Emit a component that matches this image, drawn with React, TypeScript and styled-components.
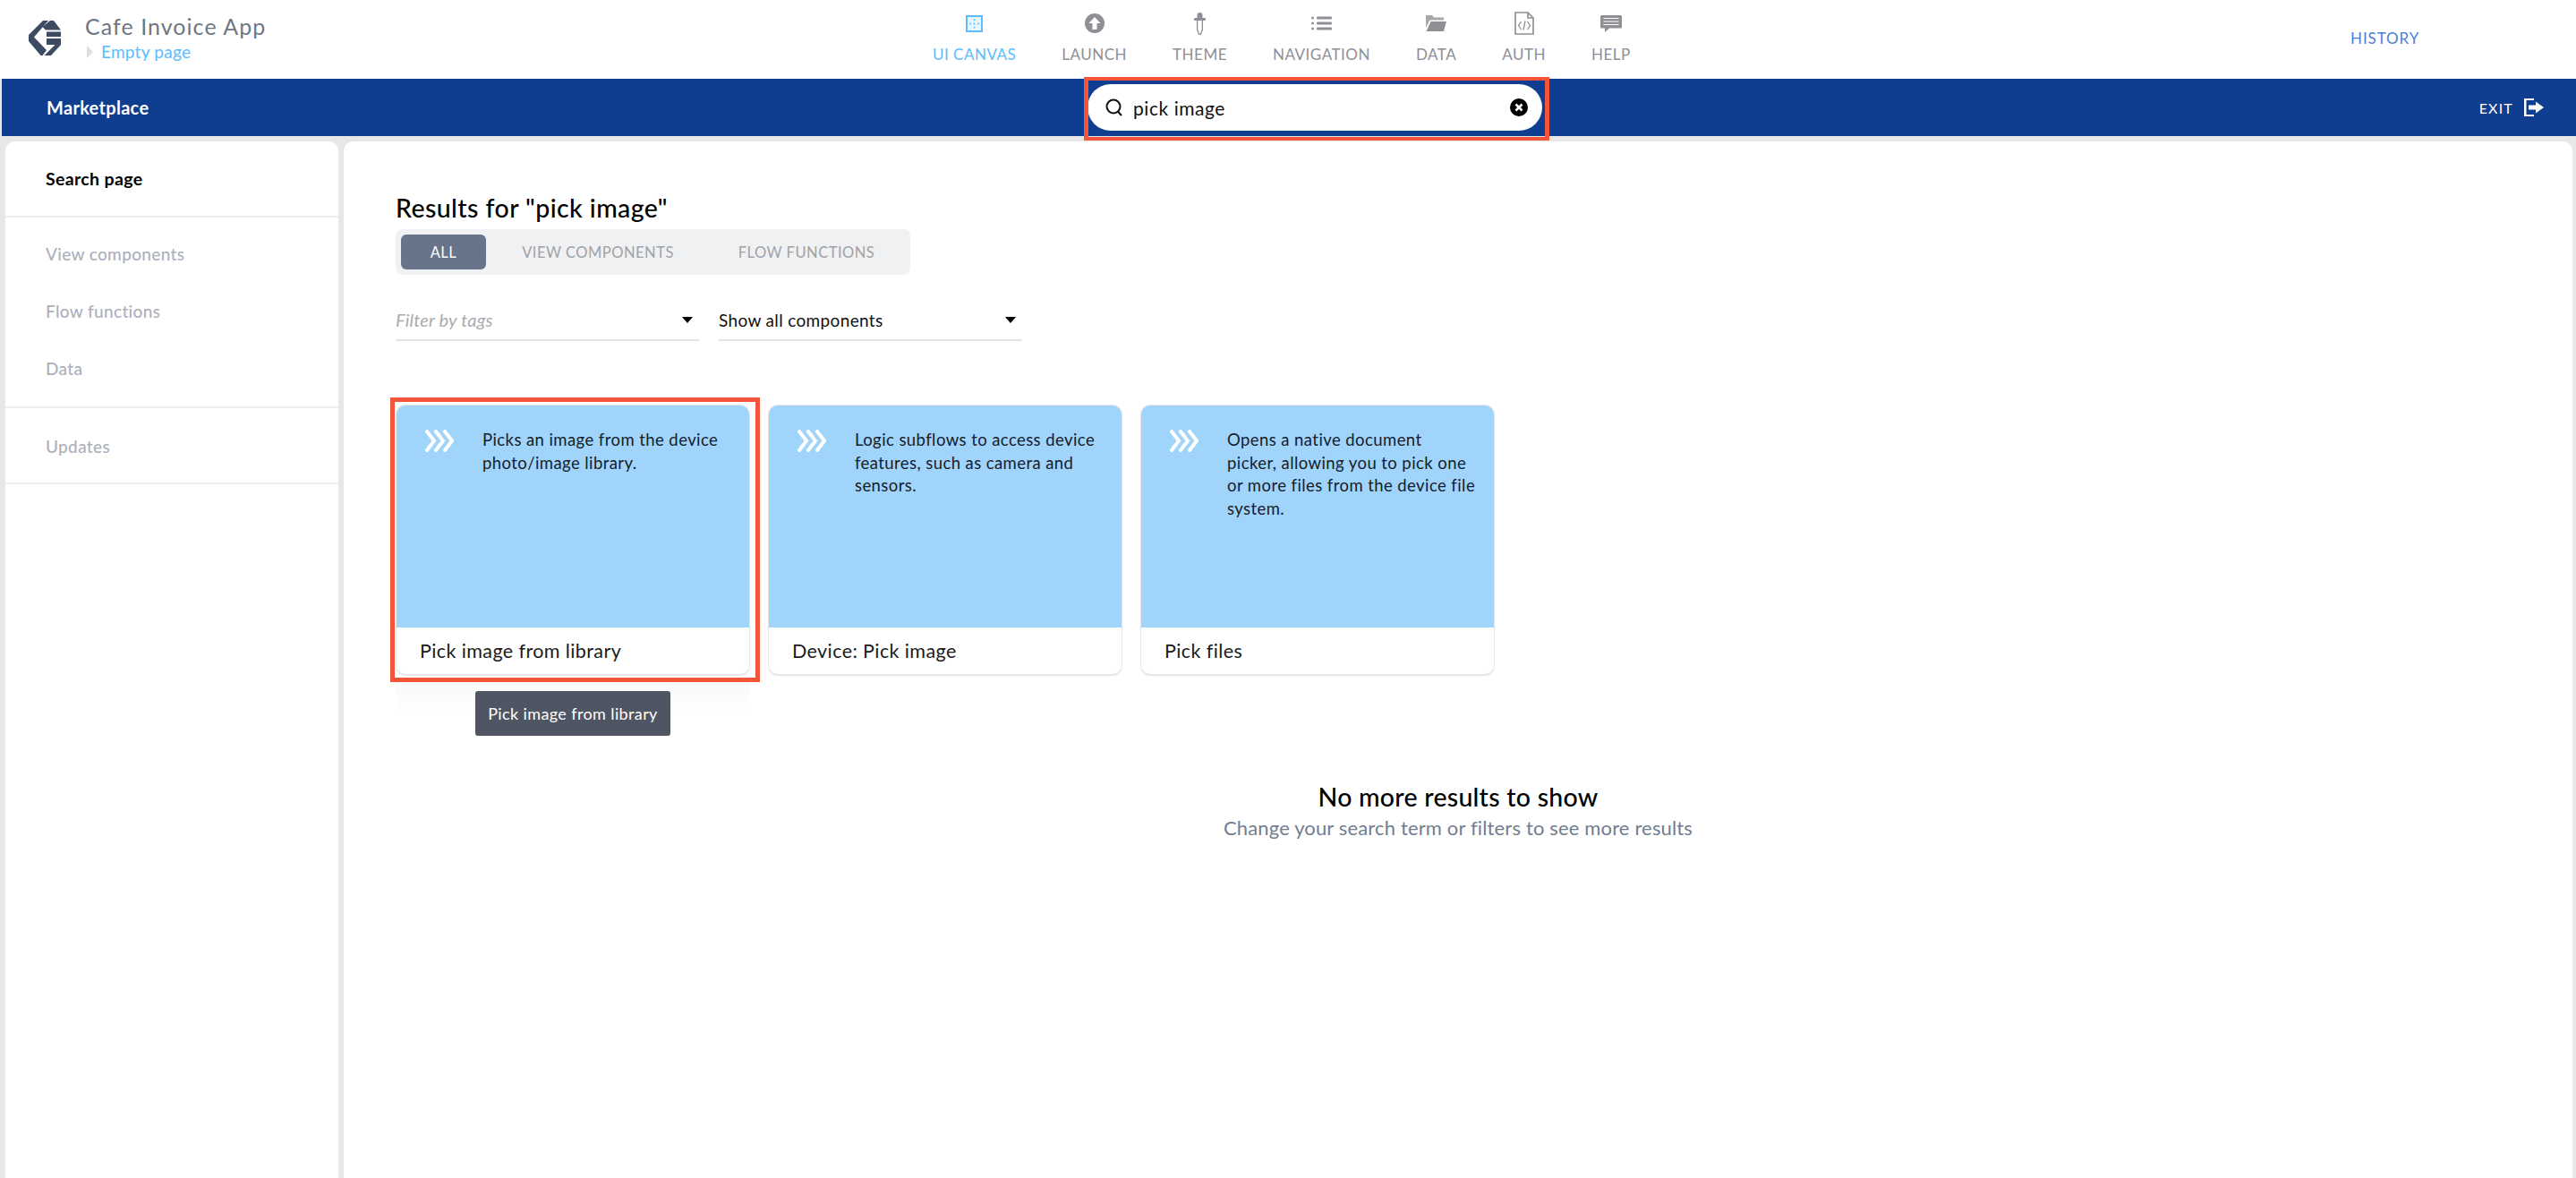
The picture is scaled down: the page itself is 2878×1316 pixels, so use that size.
import React from "react";
import styled, { createGlobalStyle } from "styled-components";

const Global = createGlobalStyle`
  html, body { margin: 0; padding: 0; background: #e7e7e7; }
  body { font-family: "Lato", "Open Sans", sans-serif; color: #000; }
  * { box-sizing: border-box; }
`;

const Page = styled.div`
  width: 2878px; height: 1316px; display: flex; flex-direction: column; overflow: hidden; background: #e7e7e7;
`;
const TopBar = styled.header`
  height: 88px; flex: none; background: #fff; position: relative; display: flex; align-items: stretch; justify-content: space-between;
`;
const Brand = styled.div`
  width: 1060px; display: flex; align-items: flex-start; padding: 23px 0 0 32px;
`;
const BrandText = styled.div`
  margin-left: 26px; margin-top: -9px; display: flex; flex-direction: column;
`;
const AppName = styled.div`
  font-size: 25px; line-height: 30px; letter-spacing: 1.05px; color: #6f7683;
`;
const PageCrumb = styled.div`
  display: flex; align-items: center; margin-top: 2px; font-size: 19px; line-height: 24px; color: #5bbcff; letter-spacing: 0.25px;
`;
const Caret = styled.span`
  width: 0; height: 0; border-style: solid; border-width: 7px 0 7px 7px; border-color: transparent transparent transparent #dcdee2; margin: 0 9px 0 2px;
`;
const Nav = styled.nav`
  display: flex; gap: 51px; position: absolute; left: 1042px; top: 0;
`;
const NavItem = styled.div<{ $active?: boolean }>`
  display: flex; flex-direction: column; align-items: center; height: 88px; padding-top: 11px; color: ${(p) => (p.$active ? "#5bbcff" : "#8e9095")};
  font-size: 17px; letter-spacing: 0.5px; white-space: nowrap;
`;
const NavIcon = styled.div`
  height: 30px; display: flex; align-items: center; justify-content: center;
`;
const NavLabel = styled.div`
  margin-top: 9px; line-height: 22px;
`;
const History = styled.div`
  position: absolute; left: 2626px; top: 33px; font-size: 17px; line-height: 20px; letter-spacing: 0.9px; color: #4a7fd6;
`;
const BlueBar = styled.div`
  height: 64px; flex: none; margin-left: 2px; background: #0f3d8f; display: flex; align-items: center; justify-content: space-between; padding: 0 36px 0 50px; position: relative;
`;
const BarTitle = styled.div`
  color: #fff; font-size: 20px; font-weight: 700; letter-spacing: 0.3px;
`;
const SearchPill = styled.div`
  position: absolute; left: 1213px; top: 6px; width: 508px; height: 52px; border-radius: 26px; background: #fff; display: flex; align-items: center; padding: 0 16px 0 20px;
`;
const SearchText = styled.div`
  flex: 1; margin-left: 11px; font-size: 21px; letter-spacing: 0.55px; color: #111;
`;
const RedBox = styled.div`
  position: absolute; border: 5px solid #f4553a; pointer-events: none;
`;
const SearchHighlight = styled(RedBox)`
  left: 1209px; top: -2px; width: 520px; height: 71px; border-width: 4px 5px;
`;
const Exit = styled.div`
  display: flex; align-items: center; gap: 12px; color: #fff; font-size: 16px; letter-spacing: 1.2px;
`;
const Body = styled.div`
  flex: 1; display: flex; gap: 6px; padding: 6px 4px 0 6px; min-height: 0;
`;
const Sidebar = styled.aside`
  width: 372px; flex: none; background: #fff; border-radius: 10px 10px 0 0; display: flex; flex-direction: column;
`;
const SideGroup = styled.div<{ $top: number; $bottom: number }>`
  display: flex; flex-direction: column; border-bottom: 2px solid #eceef0; padding: ${(p) => p.$top}px 0 ${(p) => p.$bottom}px;
`;
const SideItem = styled.div<{ $active?: boolean }>`
  height: 64px; display: flex; align-items: center; padding-left: 45px; letter-spacing: 0.35px;
  font-size: ${(p) => (p.$active ? "19.500px" : "19px")}; font-weight: ${(p) => (p.$active ? 700 : 500)};
  color: ${(p) => (p.$active ? "#000" : "#acb0bc")};
`;
const Main = styled.main`
  flex: 1; background: #fff; border-radius: 10px 10px 0 0; padding: 58px 0 0 58px; display: flex; flex-direction: column; position: relative;
`;
const Heading = styled.h1`
  margin: 0; font-size: 28.500px; line-height: 33px; font-weight: 500; letter-spacing: 0.42px; color: #000;
`;
const Tabs = styled.div`
  margin-top: 7px; width: 575px; height: 51px; background: #f0f1f3; border-radius: 8px; display: flex; align-items: center; padding-left: 6px;
`;
const Tab = styled.div<{ $active?: boolean; $w: number }>`
  width: ${(p) => p.$w}px; height: 39px; border-radius: 6px; display: flex; align-items: center; justify-content: center; font-size: 16.500px; letter-spacing: 0.5px;
  color: ${(p) => (p.$active ? "#fff" : "#a0a2a6")}; background: ${(p) => (p.$active ? "#677489" : "transparent")};
`;
const Filters = styled.div`
  display: flex; gap: 22px; margin-top: 27px;
`;
const Select = styled.div<{ $placeholder?: boolean }>`
  width: 339px; height: 47px; border-bottom: 2px solid #e2e3e5; display: flex; align-items: center; justify-content: space-between; padding-right: 7px; padding-top: 1px;
  font-size: ${(p) => (p.$placeholder ? "20px" : "19px")}; font-style: ${(p) => (p.$placeholder ? "italic" : "normal")}; color: ${(p) => (p.$placeholder ? "#a9abb0" : "#111")};
  letter-spacing: ${(p) => (p.$placeholder ? "0.2px" : "0.35px")};
`;
const Arrow = styled.span`
  width: 0; height: 0; border-style: solid; border-width: 7px 6px 0 6px; border-color: #000 transparent transparent transparent;
`;
const Cards = styled.div`
  display: flex; gap: 22px; margin-top: 72px; margin-left: 1px; position: relative;
`;
const Card = styled.div`
  width: 394px; height: 300px; border-radius: 10px; background: #fff; overflow: hidden; display: flex; flex-direction: column;
  box-shadow: 0 0 0 1px #e4e6ea, 0 2px 2px rgba(60, 70, 90, 0.16);
`;
const CardArt = styled.div`
  height: 248px; background: #a0d4fb; display: flex; padding: 27px 20px 0 32px;
`;
const Chevrons = styled.svg`
  width: 32px; height: 25px; flex: none; margin-right: 32px;
`;
const CardDesc = styled.div`
  font-size: 18.500px; line-height: 25.600px; letter-spacing: 0.42px; color: #16202c; margin-top: -1px;
`;
const CardTitle = styled.div`
  flex: 1; display: flex; align-items: center; padding-left: 26px; font-size: 21.500px; letter-spacing: 0.4px; color: #1a1a1a;
`;
const CardHighlight = styled(RedBox)`
  left: -7px; top: -9px; width: 413px; height: 318px;
`;
const Tooltip = styled.div`
  position: absolute; left: 88px; top: 319px; width: 218px; height: 50px; border-radius: 3px; background: #4f5562; color: #fff; display: flex; align-items: center; justify-content: center; font-size: 18px; letter-spacing: 0.38px;
`;
const TooltipGlow = styled.div`
  position: absolute; left: 0; top: 309px; width: 394px; height: 36px; background: linear-gradient(rgba(60, 70, 90, 0.03), rgba(60, 70, 90, 0));
`;
const Empty = styled.div`
  margin-top: 119px; margin-left: -58px; text-align: center; display: flex; flex-direction: column; align-items: center;
`;
const EmptyTitle = styled.div`
  font-size: 28.500px; line-height: 36px; font-weight: 500; letter-spacing: 0.25px; color: #000;
`;
const EmptySub = styled.div`
  margin-top: 2px; font-size: 22px; line-height: 30px; letter-spacing: 0.15px; color: #727d90;
`;

const Logo = () => (
  <svg width="37" height="40" viewBox="0 0 37 40" fill="#3c4b61">
    <path d="M16 0 L22 0 L6 18.500 L20 33 L15.500 39 L13.500 39 L0 23 L0 16 Z" />
    <path d="M24 0 L28 0 L36 10.500 L19 10.500 L15.500 7 Z" />
    <path d="M20 12.500 L36 12.500 L36 18 L20 18 Z" />
    <path d="M20 20 L36 20 L36 27 L25 39 L17.500 39 L29.500 27 L20 27 Z" />
  </svg>
);

const Cv = () => (
  <Chevrons viewBox="0 0 32 25" fill="none" stroke="#fff" strokeWidth="4" strokeLinecap="round" strokeLinejoin="miter">
    <path d="M2 2 L10 12.500 L2 23" />
    <path d="M12 2 L20 12.500 L12 23" />
    <path d="M22 2 L30 12.500 L22 23" />
  </Chevrons>
);

const CanvasIcon = () => (
  <svg width="19" height="19" viewBox="0 0 19 19">
    <rect x="1" y="1" width="17" height="17" fill="#eaf6ff" stroke="#5bbcff" strokeWidth="2" />
    <g fill="#5bbcff">
      <circle cx="9.500" cy="5.200" r="1" />
      <circle cx="5.200" cy="9.500" r="1" />
      <circle cx="9.500" cy="9.500" r="1" />
      <circle cx="13.800" cy="9.500" r="1" />
      <circle cx="9.500" cy="13.800" r="1" />
    </g>
  </svg>
);
const LaunchIcon = () => (
  <svg width="22" height="22" viewBox="0 0 22 22">
    <circle cx="11" cy="11" r="11" fill="#8e9095" />
    <path d="M11 4 L17.500 11 L13.500 11 L13.500 18 L8.500 18 L8.500 11 L4.500 11 Z" fill="#fff" />
  </svg>
);
const ThemeIcon = () => (
  <svg width="13" height="25" viewBox="0 0 13 25" fill="#8e9095">
    <path d="M3.500 6 L3.500 2.500 Q3.500 0 6.500 0 Q9.500 0 9.500 2.500 L9.500 6 Z" />
    <rect x="0" y="6" width="13" height="3" rx="1" />
    <path d="M3 9 L10 9 L10 19.500 L7.800 25 L5.200 25 L3 19.500 Z M4.300 9 L4.300 19.300 L6.200 23.800 L6.800 23.800 L8.700 19.300 L8.700 9 Z" fillRule="evenodd" />
  </svg>
);
const NavigationIcon = () => (
  <svg width="23" height="16" viewBox="0 0 23 16" fill="#8e9095">
    <circle cx="1.500" cy="2" r="1.500" />
    <rect x="6" y="0.500" width="17" height="3" rx="1" />
    <circle cx="1.500" cy="8" r="1.500" />
    <rect x="6" y="6.500" width="17" height="3" rx="1" />
    <circle cx="1.500" cy="14" r="1.500" />
    <rect x="6" y="12.500" width="17" height="3" rx="1" />
  </svg>
);
const FolderIcon = () => (
  <svg width="23" height="18" viewBox="0 0 23 18" fill="#8e9095">
    <path d="M0 0 L7 0 L9 2.500 L20 2.500 L20 5.500 L4.500 5.500 L0 14 Z" fill="#a6a8ac" />
    <path d="M5.500 7 L23 7 L20 18 L0.500 18 Z" />
  </svg>
);
const AuthIcon = () => (
  <svg width="22" height="26" viewBox="0 0 22 26" fill="none" stroke="#8e9095" strokeWidth="1.700">
    <path d="M1 1 L15 1 L21 7 L21 25 L1 25 Z" />
    <path d="M15 1 L15 7 L21 7" />
    <path d="M7.500 11 L4.500 15.500 L7.500 20 M14.500 11 L17.500 15.500 L14.500 20 M12 10.500 L10 20.500" strokeWidth="1.300" />
  </svg>
);
const HelpIcon = () => (
  <svg width="24" height="19" viewBox="0 0 24 19" fill="#8e9095">
    <path d="M1.500 0 L22.500 0 Q24 0 24 1.500 L24 13 Q24 14.500 22.500 14.500 L10 14.500 L5 19 L5 14.500 L1.500 14.500 Q0 14.500 0 13 L0 1.500 Q0 0 1.500 0 Z" />
    <path d="M3.500 3.500h17M3.500 7h17M3.500 10.500h17" stroke="#fff" strokeWidth="1.200" />
  </svg>
);
const SearchIcon = () => (
  <svg width="20" height="20" viewBox="0 0 20 20" fill="none" stroke="#111" strokeWidth="2">
    <circle cx="9" cy="9" r="7.500" />
    <path d="M13.500 14 L18 19" />
  </svg>
);
const ClearIcon = () => (
  <svg width="20" height="20" viewBox="0 0 20 20">
    <circle cx="10" cy="10" r="10" fill="#000" />
    <path d="M6.500 6.500 L13.500 13.500 M13.500 6.500 L6.500 13.500" stroke="#fff" strokeWidth="2.600" />
  </svg>
);
const ExitIcon = () => (
  <svg width="22" height="20" viewBox="0 0 22 20" fill="#fff">
    <path d="M0 0 L11 0 L11 2 L2.500 2 L2.500 18 L11 18 L11 20 L0 20 Z" />
    <path d="M5 7.500 L13 7.500 L13 3.500 L22 10 L13 16.500 L13 12.500 L5 12.500 Z" />
  </svg>
);

const navItems = [
  { label: "UI CANVAS", icon: <CanvasIcon />, active: true },
  { label: "LAUNCH", icon: <LaunchIcon /> },
  { label: "THEME", icon: <ThemeIcon /> },
  { label: "NAVIGATION", icon: <NavigationIcon /> },
  { label: "DATA", icon: <FolderIcon /> },
  { label: "AUTH", icon: <AuthIcon /> },
  { label: "HELP", icon: <HelpIcon /> },
];

const cards = [
  { title: "Pick image from library", desc: ["Picks an image from the device", "photo/image library."] },
  { title: "Device: Pick image", desc: ["Logic subflows to access device", "features, such as camera and", "sensors."] },
  { title: "Pick files", desc: ["Opens a native document", "picker, allowing you to pick one", "or more files from the device file", "system."] },
];

export default function App() {
  return (
    <Page>
      <Global />
      <TopBar>
        <Brand>
          <Logo />
          <BrandText>
            <AppName>Cafe Invoice App</AppName>
            <PageCrumb>
              <Caret />
              Empty page
            </PageCrumb>
          </BrandText>
        </Brand>
        <Nav>
          {navItems.map((n) => (
            <NavItem key={n.label} $active={n.active}>
              <NavIcon>{n.icon}</NavIcon>
              <NavLabel>{n.label}</NavLabel>
            </NavItem>
          ))}
        </Nav>
        <History>HISTORY</History>
      </TopBar>
      <BlueBar>
        <BarTitle>Marketplace</BarTitle>
        <SearchPill>
          <SearchIcon />
          <SearchText>pick image</SearchText>
          <ClearIcon />
        </SearchPill>
        <SearchHighlight />
        <Exit>
          EXIT
          <ExitIcon />
        </Exit>
      </BlueBar>
      <Body>
        <Sidebar>
          <SideGroup $top={9} $bottom={10}>
            <SideItem $active>Search page</SideItem>
          </SideGroup>
          <SideGroup $top={8} $bottom={11}>
            <SideItem>View components</SideItem>
            <SideItem>Flow functions</SideItem>
            <SideItem>Data</SideItem>
          </SideGroup>
          <SideGroup $top={10} $bottom={9}>
            <SideItem>Updates</SideItem>
          </SideGroup>
        </Sidebar>
        <Main>
          <Heading>Results for "pick image"</Heading>
          <Tabs>
            <Tab $active $w={95}>ALL</Tab>
            <Tab $w={250}>VIEW COMPONENTS</Tab>
            <Tab $w={216}>FLOW FUNCTIONS</Tab>
          </Tabs>
          <Filters>
            <Select $placeholder>
              Filter by tags
              <Arrow />
            </Select>
            <Select>
              Show all components
              <Arrow />
            </Select>
          </Filters>
          <Cards>
            {cards.map((c) => (
              <Card key={c.title}>
                <CardArt>
                  <Cv />
                  <CardDesc>
                    {c.desc.map((l) => (
                      <div key={l}>{l}</div>
                    ))}
                  </CardDesc>
                </CardArt>
                <CardTitle>{c.title}</CardTitle>
              </Card>
            ))}
            <CardHighlight />
            <TooltipGlow />
            <Tooltip>Pick image from library</Tooltip>
          </Cards>
          <Empty>
            <EmptyTitle>No more results to show</EmptyTitle>
            <EmptySub>Change your search term or filters to see more results</EmptySub>
          </Empty>
        </Main>
      </Body>
    </Page>
  );
}
